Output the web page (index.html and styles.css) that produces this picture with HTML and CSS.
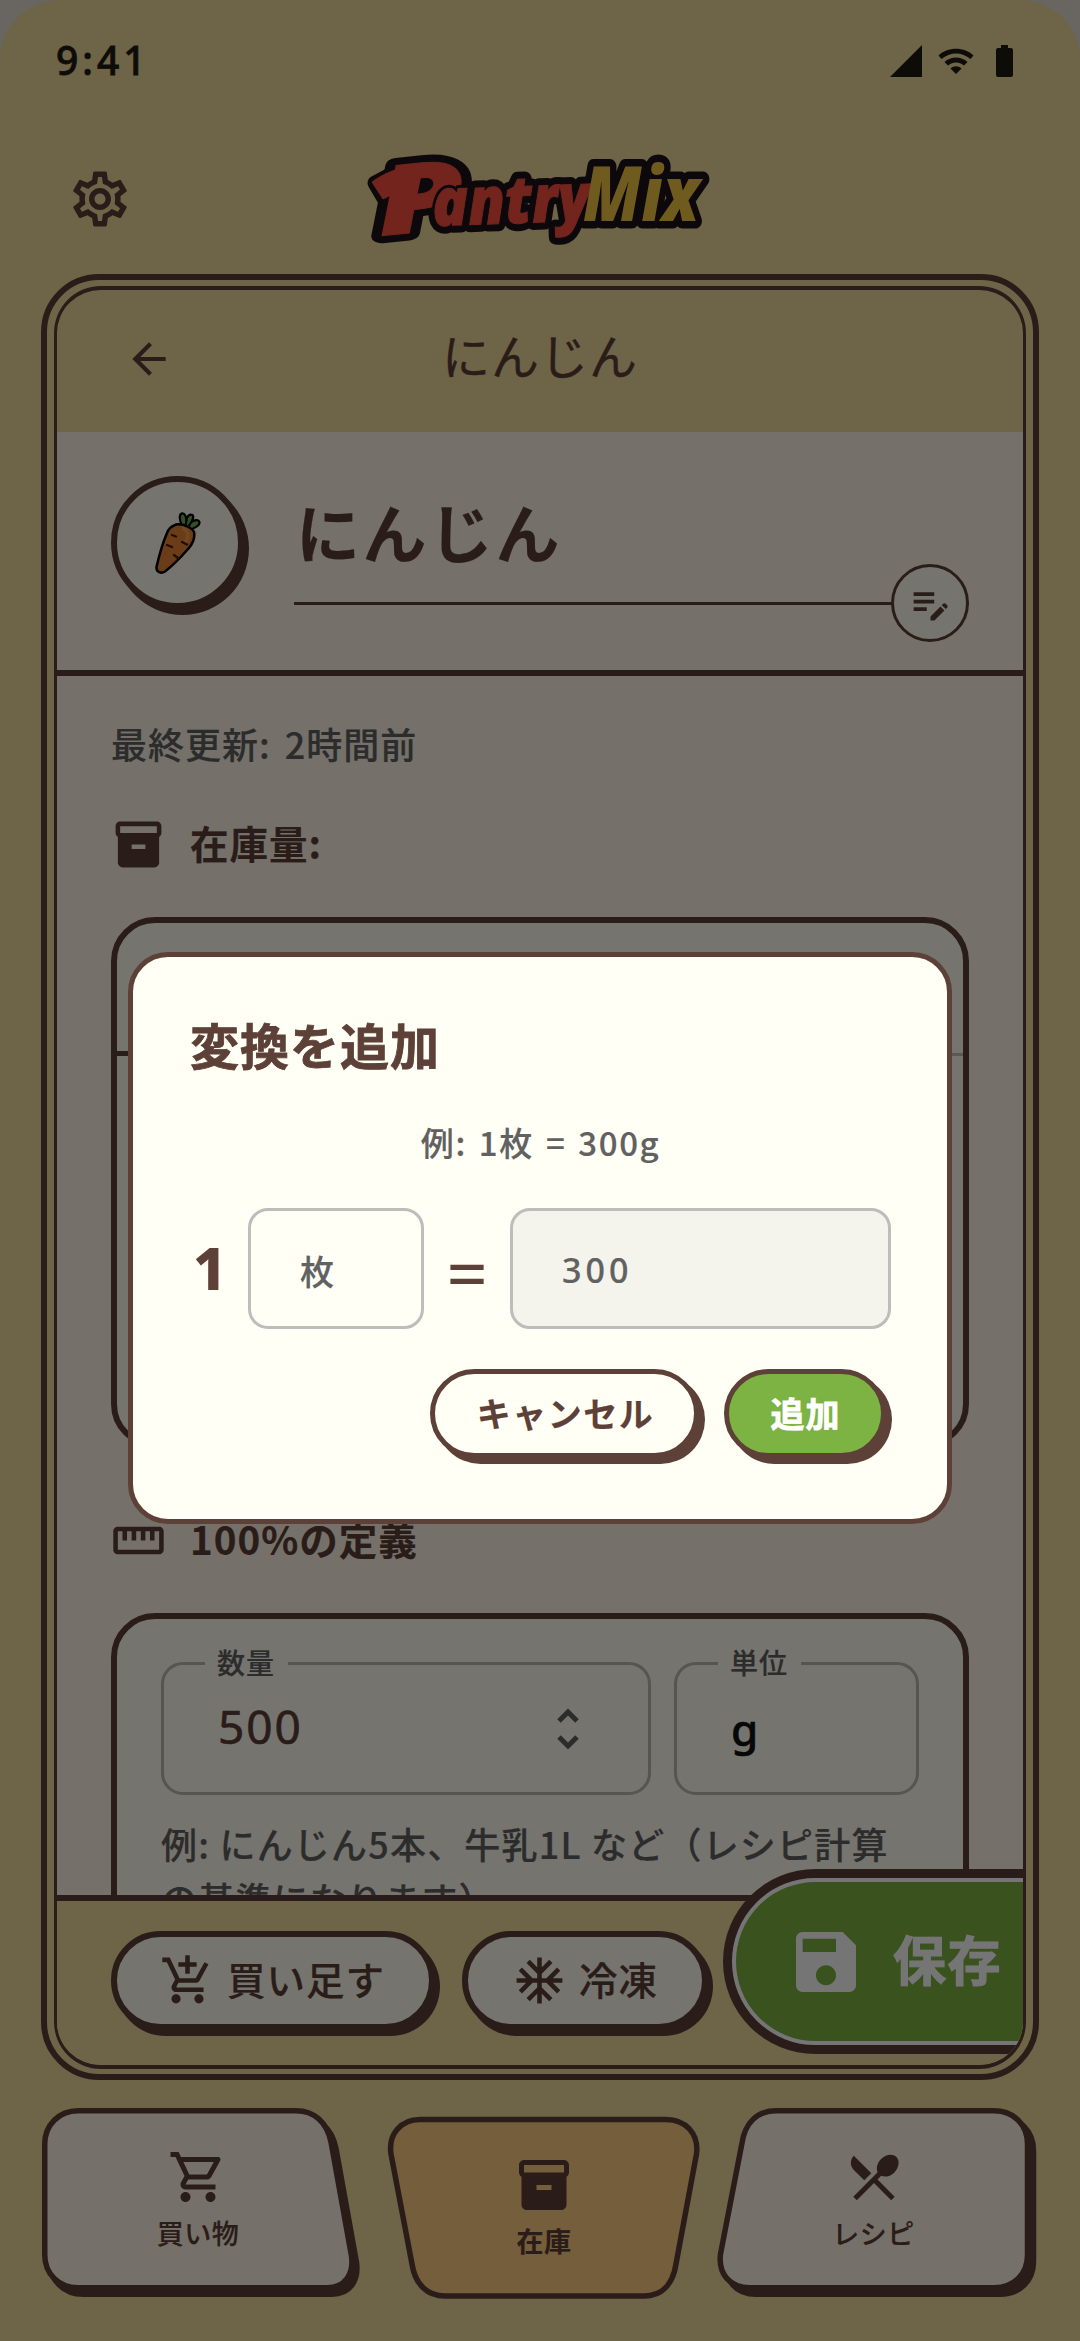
FILE: index.html
```html
<!DOCTYPE html>
<html lang="ja">
<head>
<meta charset="utf-8">
<title>PantryMix</title>
<link rel="stylesheet" href="styles.css">
</head>
<body>
<div class="screen">
  <header class="status">
    <span class="clock">9:41</span>
    <svg class="status-icons" width="124" height="34" viewBox="0 0 124 34">
      <path d="M0 33L32 1V33Z"/>
      <path d="M48.500 11.500C57 2.500 75 2.500 83.500 11.500L80.500 15C72 7.500 60 7.500 51.500 15ZM54.500 18C60.500 12 71.500 12 77.500 18L74 21.500C69 17.500 63 17.500 58 21.500ZM60.500 24.500C63.500 21.500 68.500 21.500 71.500 24.500L66 30Z"/>
      <path d="M108 4H111V1H118V4H121Q123 4 123 6V31Q123 33 121 33H108Q106 33 106 31V6Q106 4 108 4Z"/>
    </svg>
  </header>

  <div class="topbar">
    <svg class="gear" viewBox="0 0 24 24"><path d="M19.43 12.98c.04-.32.07-.64.07-.98 0-.34-.03-.66-.07-.98l2.110-1.650c.19-.15.24-.42.12-.64l-2-3.460c-.09-.16-.26-.25-.44-.25-.06 0-.12.01-.17.03l-2.490 1c-.52-.4-1.080-.73-1.690-.98l-.38-2.650C14.46 2.180 14.250 2 14 2h-4c-.25 0-.46.18-.49.42l-.38 2.650c-.61.25-1.170.59-1.690.98l-2.490-1c-.06-.02-.12-.03-.18-.03-.17 0-.34.09-.43.25l-2 3.460c-.13.22-.07.49.12.64l2.110 1.650c-.04.32-.07.65-.07.98 0 .33.03.66.07.98l-2.110 1.650c-.19.15-.24.42-.12.64l2 3.460c.09.16.26.25.44.25.06 0 .12-.01.17-.03l2.490-1c.52.4 1.080.73 1.690.98l.38 2.650c.03.24.24.42.49.42h4c.25 0 .46-.18.49-.42l.38-2.650c.61-.25 1.170-.59 1.690-.98l2.490 1c.06.02.12.03.18.03.17 0 .34-.09.43-.25l2-3.460c.12-.22.07-.49-.12-.64l-2.110-1.650zm-1.980-1.710c.04.31.05.52.05.73 0 .21-.02.43-.05.73l-.14 1.130.89.7 1.080.84-.7 1.210-1.270-.51-1.040-.42-.9.68c-.43.32-.84.56-1.250.73l-1.060.43-.16 1.130-.2 1.350h-1.400l-.19-1.350-.16-1.130-1.060-.43c-.43-.18-.83-.41-1.230-.71l-.91-.7-1.060.43-1.270.51-.7-1.210 1.080-.84.89-.7-.14-1.130c-.03-.31-.05-.54-.05-.74s.02-.43.05-.73l.14-1.130-.89-.7-1.080-.84.7-1.210 1.270.51 1.040.42.9-.68c.43-.32.84-.56 1.250-.73l1.060-.43.16-1.130.2-1.350h1.390l.19 1.350.16 1.130 1.060.43c.43.18.83.41 1.230.71l.91.7 1.060-.43 1.270-.51.7 1.210-1.070.85-.89.7.14 1.130zM12 8c-2.210 0-4 1.790-4 4s1.790 4 4 4 4-1.790 4-4-1.790-4-4-4zm0 6c-1.100 0-2-.9-2-2s.9-2 2-2 2 .9 2 2-.9 2-2 2z"/></svg>
    <svg class="logo" width="360" height="100" viewBox="0 0 360 100">
      <g class="logo-outline">
        <text class="lp" x="0" y="0" textLength="88" lengthAdjust="spacingAndGlyphs" transform="translate(19 86) rotate(-6)">P</text>
        <path d="M14 33L46 16L44 44L24 50Z"/>
        <text class="la" x="0" y="0" textLength="158" lengthAdjust="spacingAndGlyphs" transform="translate(72 76) rotate(-2)">antry</text>
        <text class="lm" x="0" y="0" textLength="116" lengthAdjust="spacingAndGlyphs" transform="translate(222 71)">Mix</text>
      </g>
      <g aria-hidden="true">
        <text class="lp red" x="0" y="0" textLength="88" lengthAdjust="spacingAndGlyphs" transform="translate(19 86) rotate(-6)">P</text>
        <path class="red" d="M11 32C22 24 34 19 50 16L48 36L22 49Z"/>
        <text class="la rim" x="0" y="0" textLength="158" lengthAdjust="spacingAndGlyphs" transform="translate(72 76) rotate(-2)">antry</text>
        <text class="la red" x="0" y="0" textLength="158" lengthAdjust="spacingAndGlyphs" transform="translate(72 76) rotate(-2)">antry</text>
        <text class="lm gold" x="0" y="0" textLength="116" lengthAdjust="spacingAndGlyphs" transform="translate(222 71)">Mix</text>
      </g>
    </svg>
  </div>

  <main class="frame">
    <div class="panel">
      <div class="page-head">
        <svg class="back" viewBox="0 0 24 24"><path d="M20 11H7.830l5.590-5.590L12 4l-8 8 8 8 1.410-1.410L7.830 13H20v-2z"/></svg>
        <h1>にんじん</h1>
      </div>

      <section class="hero">
        <div class="avatar">
          <svg width="46" height="62" viewBox="0 0 46 62">
            <g fill="#6fae55" stroke="#000" stroke-width="2.200" stroke-linejoin="round">
              <path d="M27 14C23 5 25 1 28 1.500C31 2 31 7 31.500 8C32 4 35 1.500 37.500 3C39.500 5 37 9 36 10.500C39 8 43.500 7 44.500 10C45 14 38 17 33 18Z"/>
              <path d="M31.500 8L30.500 14M36 10.500L33 15" fill="none"/>
            </g>
            <path d="M19 13.500C24 10 37 15 39 20C40.500 26 37 33 33 37C27 44 17 54 10 59.500C6 62 1 60 1.500 55C4 44 9 28 12 21C14 16 16 14.500 19 13.500Z" fill="#e98335" stroke="#000" stroke-width="2.500"/>
            <path d="M27 16C33 18 35 24 30 31" fill="none" stroke="#f39a4e" stroke-width="4"/>
            <path d="M17 23l4 1.500M27 30l5 2.500M12 33l5 2M19 43l4 3" stroke="#4a1c05" stroke-width="2.300" stroke-linecap="round"/>
          </svg>
        </div>
        <div class="name-field">
          <div class="name">にんじん</div>
          <div class="edit"><svg viewBox="0 0 24 24"><path d="M3 10h11v2H3v-2zm0-2h11V6H3v2zm0 8h7v-2H3v2zm15.010-3.130.71-.71c.39-.39 1.020-.39 1.410 0l.71.71c.39.39.39 1.020 0 1.410l-.71.71-2.120-2.120zm-.71.71-5.300 5.300V21h2.120l5.300-5.300-2.120-2.120z"/></svg></div>
        </div>
      </section>

      <section class="scroll">
        <p class="updated">最終更新: 2時間前</p>
        <h2 class="section-title"><svg viewBox="0 0 24 24"><path d="M20 2H4c-1 0-2 .9-2 2v3.010c0 .72.43 1.340 1 1.690V20c0 1.100 1.100 2 2 2h14c.9 0 2-.9 2-2V8.700c.57-.35 1-.97 1-1.690V4c0-1.100-1-2-2-2zm-5 12H9v-2h6v2zm5-7H4V4h16v3z"/></svg><span>在庫量:</span></h2>
        <div class="card stock"><div class="tabs"><i></i></div></div>
        <h2 class="section-title second"><svg viewBox="0 0 24 24"><path d="M21 6H3c-1.100 0-2 .9-2 2v8c0 1.100.9 2 2 2h18c1.100 0 2-.9 2-2V8c0-1.100-.9-2-2-2zm0 10H3V8h2v4h2V8h2v4h2V8h2v4h2V8h2v4h2V8h2v8z"/></svg><span>100%の定義</span></h2>
        <div class="card define">
          <div class="fields">
            <div class="field amount"><span class="label">数量</span><span class="value">500</span>
              <svg width="22" height="42" viewBox="0 0 22 42"><path d="M2 13L11 4L20 13M2 29L11 38L20 29"/></svg>
            </div>
            <div class="field unit"><span class="label">単位</span><span class="value">g</span></div>
          </div>
          <p class="hint">例: にんじん5本、牛乳1L など（レシピ計算<br>の基準になります）</p>
        </div>
      </section>

      <footer class="actions">
        <button class="pill restock"><svg viewBox="0 0 24 24"><path d="M11 9h2V6h3V4h-3V1h-2v3H8v2h3v3zm-4 9c-1.100 0-1.990.9-1.990 2S5.900 22 7 22s2-.9 2-2-.9-2-2-2zm10 0c-1.100 0-1.990.9-1.990 2s.89 2 1.990 2 2-.9 2-2-.9-2-2-2zm-9.830-3.250l.03-.12.9-1.630h7.450c.75 0 1.410-.41 1.750-1.030l3.860-7.010L19.420 4h-.01l-1.100 2-2.760 5H8.530l-.13-.27L6.160 6l-.95-2-.94-2H1v2h2l3.600 7.590-1.350 2.450c-.16.28-.25.61-.25.96 0 1.100.9 2 2 2h12v-2H7.420c-.13 0-.25-.11-.25-.25z"/></svg><span>買い足す</span></button>
        <button class="pill freeze"><svg viewBox="0 0 24 24"><path d="M22 11h-4.170l3.240-3.240-1.410-1.420L15 11h-2V9l4.660-4.660-1.420-1.410L13 6.170V2h-2v4.170L7.760 2.930 6.340 4.340 11 9v2H9L4.340 6.340 2.930 7.760 6.170 11H2v2h4.170l-3.240 3.240 1.410 1.420L9 13h2v2l-4.660 4.660 1.420 1.410L11 17.830V22h2v-4.170l3.240 3.240 1.420-1.410L13 15v-2h2l4.660 4.660 1.410-1.420L17.830 13H22z"/></svg><span>冷凍</span></button>
        <button class="save"><svg viewBox="0 0 24 24"><path d="M17 3H5c-1.110 0-2 .9-2 2v14c0 1.100.89 2 2 2h14c1.100 0 2-.9 2-2V7l-4-4zm-5 16c-1.660 0-3-1.340-3-3s1.340-3 3-3 3 1.340 3 3-1.340 3-3 3zm3-10H5V5h10v4z"/></svg><span>保存</span></button>
      </footer>
    </div>
  </main>

  <nav class="nav">
    <a class="tab t1">
      <svg class="shape" viewBox="0 0 324 190"><path transform="translate(5 6.500)" d="M36 2.750H254C272 2.750 285 14 289 34L309.500 148C312 166 303 179.750 285 179.750H36C17 179.750 2.750 166 2.750 147V36C2.750 17 17 2.750 36 2.750Z"/><path class="face" d="M36 2.750H254C272 2.750 285 14 289 34L309.500 148C312 166 303 179.750 285 179.750H36C17 179.750 2.750 166 2.750 147V36C2.750 17 17 2.750 36 2.750Z"/></svg>
      <svg class="glyph" viewBox="0 0 24 24"><path d="M15.550 13c.75 0 1.410-.41 1.750-1.030l3.580-6.490c.37-.66-.11-1.480-.87-1.480H5.210l-.94-2H1v2h2l3.600 7.590-1.350 2.440C4.520 15.370 5.480 17 7 17h12v-2H7l1.100-2h7.450zM6.160 6h12.150l-2.760 5H8.530L6.160 6zM7 18c-1.100 0-1.990.9-1.990 2S5.900 22 7 22s2-.9 2-2-.9-2-2-2zm10 0c-1.100 0-1.990.9-1.990 2s.89 2 1.990 2 2-.9 2-2-.9-2-2-2z"/></svg>
      <span>買い物</span>
    </a>
    <a class="tab t2">
      <svg class="shape" viewBox="0 0 324 190"><path class="face" d="M36 3.500H282C302 3.500 315 18 312.500 38L292 148C289 168 278 180 260 180H61C43 180 31 168 28 148L7 38C4 18 17 3.500 36 3.500Z"/></svg>
      <svg class="glyph" viewBox="0 0 24 24"><path d="M20 2H4c-1 0-2 .9-2 2v3.010c0 .72.43 1.340 1 1.690V20c0 1.100 1.100 2 2 2h14c.9 0 2-.9 2-2V8.700c.57-.35 1-.97 1-1.690V4c0-1.100-1-2-2-2zm-5 12H9v-2h6v2zm5-7H4V4h16v3z"/></svg>
      <span>在庫</span>
    </a>
    <a class="tab t3">
      <svg class="shape" viewBox="0 0 324 190"><path transform="translate(6 6.500)" d="M62 2.750H280C300 2.750 313.500 17 313.500 36V147C313.500 166 300 179.750 280 179.750H36C16 179.750 4 166 6.500 146L28 35C31 15 43 2.750 62 2.750Z"/><path class="face" d="M62 2.750H280C300 2.750 313.500 17 313.500 36V147C313.500 166 300 179.750 280 179.750H36C16 179.750 4 166 6.500 146L28 35C31 15 43 2.750 62 2.750Z"/></svg>
      <svg class="glyph" viewBox="0 0 24 24"><path d="M8.100 13.340l2.830-2.830L3.910 3.500c-1.560 1.560-1.560 4.090 0 5.660l4.190 4.180zm6.780-1.810c1.530.71 3.680.21 5.270-1.380 1.910-1.910 2.280-4.650.81-6.120-1.460-1.460-4.200-1.100-6.120.81-1.590 1.590-2.090 3.740-1.380 5.270L3.700 19.870l1.410 1.410L12 14.410l6.880 6.880 1.410-1.410L13.410 13l1.470-1.470z"/></svg>
      <span>レシピ</span>
    </a>
  </nav>
</div>

<div class="scrim">
  <div class="dialog">
    <h3>変換を追加</h3>
    <p class="example">例: 1枚 = 300g</p>
    <div class="convert">
      <b>1</b>
      <div class="input from">枚</div>
      <span class="eq">=</span>
      <div class="input to">300</div>
    </div>
    <div class="buttons">
      <button class="btn cancel">キャンセル</button>
      <button class="btn primary">追加</button>
    </div>
  </div>
</div>
</body>
</html>
```
FILE: styles.css
```css
:root {
  --brown: #5d4037;
  --tan: #f0da9c;
  --cream: #fef7e7;
  --paper: #fffdf2;
  --grey: #616161;
}
* { box-sizing: border-box; margin: 0; padding: 0; }
body {
  position: relative;
  width: 1080px;
  height: 2341px;
  overflow: hidden;
  background: #e4ddd2;
  color: var(--brown);
  font-family: "Noto Sans CJK JP", sans-serif;
  font-kerning: none;
  -webkit-text-stroke: .2px;
}
svg { display: block; fill: var(--brown); flex: none; }
button { font: inherit; color: inherit; background: none; border: 0; }
p, h1, h2, h3, span, button { white-space: nowrap; }

.screen {
  width: 1080px;
  height: 2341px;
  display: flex;
  flex-direction: column;
  background: var(--tan);
  border-radius: 60px 60px 0 0;
  overflow: hidden;
}

.status {
  height: 118px;
  padding: 0 66px 0 56px;
  display: flex;
  justify-content: space-between;
  align-items: center;
}
.clock { font: 500 39px/54px "Noto Sans", sans-serif; letter-spacing: 4px; color: #1f1c12; margin-top: 2px; -webkit-text-stroke: .8px; }
.status-icons { fill: #1f1c12; margin-top: 4px; }

.topbar { height: 156px; padding: 32px 0 0 67px; display: flex; align-items: flex-start; }
.gear { width: 66px; height: 66px; margin-top: 16px; }
.logo { margin-left: 228px; overflow: visible; }
.logo text { font-family: "Open Sans", sans-serif; font-weight: 800; font-style: italic; }
.lp { font-size: 96px; }
.la { font-size: 66px; }
.lm { font-size: 76px; }
.logo-outline { fill: #1c1218; stroke: #1c1218; stroke-width: 15px; stroke-linejoin: round; }
.rim { fill: none; stroke: #1c1218; stroke-width: 7px; stroke-linejoin: round; }
.red { fill: #f84f40; stroke: #f84f40; stroke-width: 1px; }
.gold { fill: #f5c742; stroke: none; }

.frame {
  height: 1806px;
  margin: 0 41px;
  padding: 6px 7px 5px;
  border: 6px solid var(--brown);
  border-radius: 58px;
  flex: none;
}
.panel {
  height: 100%;
  display: flex;
  flex-direction: column;
  border: solid var(--brown);
  border-width: 4px 3px;
  border-radius: 47px;
  overflow: hidden;
}
.page-head { height: 142px; flex: none; display: grid; grid-template-columns: 1fr auto 1fr; align-items: center; padding: 0 67px; }
.page-head h1 { font-size: 48px; font-weight: 400; line-height: 70px; letter-spacing: 1px; margin-top: -14px; -webkit-text-stroke: .4px; }
.back { width: 50px; height: 50px; margin-top: -4px; }

.hero {
  height: 244px;
  flex: none;
  display: flex;
  padding: 44px 54px 0;
  background: var(--cream);
  border-bottom: 6px solid var(--brown);
}
.avatar {
  width: 133px; height: 133px;
  display: grid; place-items: center;
  background: var(--paper);
  border: 6px solid var(--brown);
  border-radius: 50%;
  box-shadow: 5px 6px 0 var(--brown);
}
.name-field { position: relative; margin-left: 50px; width: 675px; height: 129px; border-bottom: 3px solid var(--brown); }
.name { font-size: 64px; font-weight: 700; letter-spacing: 2.500px; line-height: 92px; padding: 8px 0 0 2px; }
.edit {
  position: absolute; right: 0; bottom: -40px;
  width: 78px; height: 78px;
  display: grid; place-items: center;
  background: var(--paper);
  border: 3px solid var(--brown);
  border-radius: 50%;
}
.edit svg { width: 45px; height: 45px; }

.scroll { height: 1219px; flex: none; overflow: hidden; background: var(--cream); padding: 41px 54px 0; }
.updated { font-size: 36px; font-weight: 500; line-height: 52px; letter-spacing: 1px; word-spacing: 5px; color: var(--grey); }
.section-title { display: flex; align-items: center; height: 56px; margin-top: 47px; gap: 24px; font-size: 38.500px; font-weight: 700; }
.section-title svg { width: 55px; height: 55px; }
.section-title span { letter-spacing: 1px; margin-top: -4px; }
.card { background: var(--paper); border: 6px solid var(--brown); border-radius: 44px; }
.stock { height: 531px; margin-top: 45px; }
.tabs { height: 133px; border-bottom: 3px solid #c4c3b8; display: flex; align-items: flex-end; }
.tabs i { width: 50%; height: 5px; background: var(--brown); margin-bottom: -3px; }
.section-title.second { margin-top: 64px; }
.define { height: 420px; margin-top: 45px; padding: 43px 44px 0; }
.fields { display: flex; gap: 23px; }
.field {
  position: relative;
  height: 133px;
  display: flex;
  align-items: center;
  padding: 0 54px;
  border: 3px solid #b9b9b2;
  border-radius: 22px;
}
.amount { width: 490px; justify-content: space-between; }
.amount svg { fill: none; stroke: var(--grey); stroke-width: 5px; margin-right: 15px; }
.unit { width: 245px; }
.label {
  position: absolute; left: 41px; top: -23px;
  padding: 0 13px 0 12px;
  background: var(--paper);
  font-size: 28px; font-weight: 500; line-height: 40px; letter-spacing: 1px;
  color: var(--grey);
}
.value { font: 400 46px/60px "Noto Sans", sans-serif; letter-spacing: 2px; margin-top: -6px; -webkit-text-stroke: .6px; }
.unit .value { font-weight: 500; color: #111; margin-top: 0; font-size: 44px; }
.hint { margin-top: 21px; font-size: 36px; font-weight: 500; line-height: 55px; letter-spacing: 1.200px; color: var(--grey); }

.actions {
  position: relative;
  height: 170px;
  flex: none;
  display: flex;
  align-items: flex-start;
  gap: 27px;
  padding: 30px 54px 0;
  background: var(--tan);
  border-top: 6px solid var(--brown);
}
.pill {
  height: 99px;
  display: flex;
  align-items: center;
  background: var(--paper);
  border: 6px solid var(--brown);
  border-radius: 50px;
  box-shadow: 5px 6px 0 var(--brown);
  font-size: 38.500px;
  font-weight: 500;
  letter-spacing: 1px;
}
.pill svg { width: 55px; height: 55px; }
.pill span { margin-top: -5px; }
.restock { width: 324px; padding-left: 43px; gap: 12px; }
.freeze { width: 246px; padding-left: 44px; gap: 12px; }
.save {
  position: absolute; left: 675px; top: -23px;
  width: 420px; height: 167px;
  display: flex;
  align-items: center;
  gap: 27px;
  padding-left: 50px;
  background: #7cb342;
  border: 4px solid #fff;
  border-radius: 84px;
  box-shadow: 0 0 0 9px var(--brown);
  color: #fff;
  font-size: 53px;
  font-weight: 700;
  letter-spacing: 1.500px;
  -webkit-text-stroke: 1.200px;
}
.save svg { width: 80px; height: 80px; fill: #fff; }
.save span { margin-top: -8px; }

.nav { display: flex; padding: 28px 42px 0; gap: 18px; }
.tab { position: relative; width: 320px; height: 190px; display: flex; flex-direction: column; align-items: center; padding-top: 39px; font-size: 27px; font-weight: 500; }
.t1 { padding-right: 8px; }
.t2 { margin-top: 8px; width: 320px; margin-left: 4px; }
.t3 { margin-left: -8px; width: 324px; padding-right: 5px; }
.shape { position: absolute; left: 0; top: 0; width: 324px; height: 190px; overflow: visible; }
.shape path { stroke: var(--brown); stroke-width: 5.500px; }
.face { fill: var(--cream); }
.t2 .face { fill: #ffcc80; }
.glyph { position: relative; width: 60px; height: 60px; }
.tab span { position: relative; line-height: 36px; margin-top: 8px; letter-spacing: .5px; }
.t2 span { font-weight: 700; margin-top: 8px; }

.scrim {
  position: absolute; inset: 0;
  display: flex;
  justify-content: center;
  align-items: flex-start;
  padding-top: 952px;
  background: rgba(0, 0, 0, .54);
}
.dialog {
  width: 824px; height: 572px;
  padding: 55px 56px 0 57px;
  background: #fffff5;
  border: 5px solid var(--brown);
  border-radius: 40px;
}
.dialog h3 { font-size: 49px; font-weight: 700; line-height: 64px; letter-spacing: 1px; -webkit-text-stroke: .8px; }
.example { margin-top: 44px; text-align: center; font-size: 33px; font-weight: 500; line-height: 44px; letter-spacing: 1.600px; word-spacing: 3px; color: var(--grey); }
.convert { margin-top: 44px; display: flex; align-items: center; height: 121px; }
.convert b { width: 58px; padding-left: 3px; font: 800 58px/80px "Noto Sans", sans-serif; margin-top: -2px; }
.eq { width: 86px; text-align: center; font: 400 72px/80px "Noto Sans", sans-serif; margin-top: 7px; }
.input { height: 121px; display: flex; align-items: center; padding: 3px 0 0 49px; border: 3px solid #bdbdba; border-radius: 20px; font-size: 34px; font-weight: 500; color: var(--grey); }
.from { width: 176px; }
.to { width: 381px; background: #f4f3ec; letter-spacing: 4px; font-family: "Noto Sans", sans-serif; }
.buttons { display: flex; justify-content: flex-end; gap: 25px; margin: 40px 5px 0 0; }
.btn { height: 89px; padding-bottom: 3px; background: #fffff5; border: 5px solid var(--brown); border-radius: 45px; box-shadow: 6px 6px 0 var(--brown); font-size: 34px; font-weight: 700; letter-spacing: 1.500px; }
.cancel { width: 269px; padding-left: 2px; }
.primary { width: 162px; padding-left: 1px; background: #7cb342; color: #fff; letter-spacing: 1px; -webkit-text-stroke: .8px; }
```
